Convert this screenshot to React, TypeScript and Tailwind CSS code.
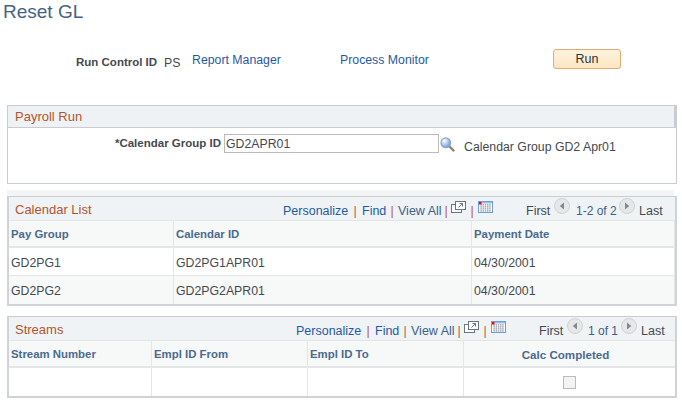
import React from 'react';

const font = { fontFamily: '"Liberation Sans", Arial, sans-serif' };

function LookupIcon() {
  return (
    <svg width="15" height="15" viewBox="0 0 15 15">
      <defs>
        <radialGradient id="lens" cx="35%" cy="30%" r="75%">
          <stop offset="0%" stopColor="#ffffff" />
          <stop offset="100%" stopColor="#5f97dc" />
        </radialGradient>
      </defs>
      <line x1="9.5" y1="9.5" x2="13.5" y2="13.5" stroke="#8d8268" strokeWidth="2.4" strokeLinecap="round" />
      <circle cx="5.8" cy="5.8" r="4.9" fill="url(#lens)" stroke="#8fa3ba" strokeWidth="1.1" />
    </svg>
  );
}

function ZoomIcon() {
  return (
    <svg width="15" height="12" viewBox="0 0 15 12" fill="none">
      <rect x="0.5" y="3.5" width="10" height="8" fill="#fff" stroke="#6a7582" />
      <rect x="4.5" y="0.5" width="10" height="8" fill="#fff" stroke="#6a7582" />
      <path d="M7.5 6.5l4-4M8.5 2.5h3v3" stroke="#6a7582" />
    </svg>
  );
}

function GridIcon() {
  return (
    <svg width="15" height="12" viewBox="0 0 15 12">
      <rect x="0.5" y="0.5" width="14" height="11" fill="#fff" stroke="#6b9ee0" />
      <rect x="1" y="1" width="13" height="1.5" fill="#9cc0ec" />
      {[0, 1, 2, 3].map(r =>
        [0, 1, 2, 3, 4].map(c => (
          <rect key={`${r}-${c}`} x={2.4 + c * 2.2} y={3.2 + r * 2} width="1.5" height="1.4" fill="#9a9fa6" />
        ))
      )}
      <rect x="1" y="1" width="2.5" height="2.5" fill="#e01010" />
    </svg>
  );
}

function NavIcon({ dir }: { dir: 'left' | 'right' }) {
  return (
    <svg width="16" height="16" viewBox="0 0 16 16">
      <circle cx="8" cy="8" r="7.5" fill="#e6e7e8" stroke="#cfd0d2" />
      <path d={dir === 'left' ? 'M10 4.5v7L5.8 8z' : 'M6 4.5v7L10.2 8z'} fill="#85878a" />
    </svg>
  );
}

function Sep({ w }: { w: string }) {
  return <span className={`${w} mt-[5px] text-center text-[#bd5a45]`}>|</span>;
}

function GridToolbar(props: { title: string; range: string; titleW: string; firstMl: string; rangeCls: string }) {
  return (
    <div className="flex h-[24px] items-center border-b border-[#e4e5e6] bg-[#eff3f5] pl-[6px]">
      <span className={`${props.titleW} mt-[3px] shrink-0 text-[13px] text-[#b4552d]`}>{props.title}</span>
      <div className="flex items-center whitespace-nowrap text-[12.5px]">
        <span className="mt-[5px] w-[65px] text-[#1f5aa6]">Personalize</span>
        <Sep w="w-[14px]" />
        <span className="mt-[5px] w-[24px] text-[#1f5aa6]">Find</span>
        <Sep w="w-[12px]" />
        <span className="mt-[5px] w-[43px] text-[#3d5f8a]">View All</span>
        <Sep w="w-[10px]" />
        <span className="mb-[3px]"><ZoomIcon /></span>
        <Sep w="w-[12px]" />
        <span className="mb-[3px]"><GridIcon /></span>
        <span className={`${props.firstMl} mt-[5px] w-[28px] text-[#45494f]`}>First</span>
        <span className="mb-[5px]"><NavIcon dir="left" /></span>
        <span className={`${props.rangeCls} mt-[5px] text-[12px] text-[#3d5f8a]`}>{props.range}</span>
        <span className="mb-[5px]"><NavIcon dir="right" /></span>
        <span className="ml-[4px] mt-[5px] text-[#45494f]">Last</span>
      </div>
    </div>
  );
}

export default function App() {
  return (
    <div className="h-[403px] w-[682px] overflow-hidden bg-white text-[12.3px] text-[#45494f]" style={font}>
      <h1 className="pl-[3px] pt-[1px] text-[19px] leading-[21px] text-[#456285]">Reset GL</h1>

      <div className="mt-[27px] flex h-[20px] items-center whitespace-nowrap pl-[76px]">
        <span className="mt-[8px] w-[88px] text-[11.5px] font-bold">Run Control ID</span>
        <span className="mt-[8px] w-[28px]">PS</span>
        <span className="mt-[2px] w-[148px] text-[#1f5aa6]">Report Manager</span>
        <span className="mt-[2px] w-[213px] text-[#1f5aa6]">Process Monitor</span>
        <button className="h-[20px] w-[68px] rounded-[3px] border border-[#e2ab6f] bg-gradient-to-b from-[#fff3df] to-[#fbe6c3] text-[12.5px] text-[#2c3340]">
          Run
        </button>
      </div>

      <section className="ml-[7px] mt-[36px] h-[79px] w-[670px] border border-[#c9ccd0]">
        <div className="flex h-[22px] items-center border-b border-r-2 border-[#c9ccd0] bg-[#eff2f4] pl-[7px] pt-[1px] text-[13px] text-[#b4552d]">
          Payroll Run
        </div>
        <div className="mt-[6px] flex items-start whitespace-nowrap">
          <span className="mt-[1px] w-[213px] text-right text-[11.5px] font-bold">*Calendar Group ID</span>
          <div className="ml-[3px] flex h-[19px] w-[215px] items-center border border-[#b9bbbe] pl-[1px] pt-[1px]">GD2APR01</div>
          <span className="ml-[1px] mt-[3px] h-[15px]"><LookupIcon /></span>
          <span className="ml-[9px] mt-[4px]">Calendar Group GD2 Apr01</span>
        </div>
      </section>

      <section className="ml-[7px] mt-[6px] w-[670px]">
        <div className="h-[6px] w-[667px] bg-[#f2f4f5]" />
        <div className="border-[2px] border-t border-[#d0d3d6] border-t-[#c9ccd0]">
          <GridToolbar title="Calendar List" range="1-2 of 2" titleW="w-[268px]" firstMl="ml-[33px]" rangeCls="ml-[6px] w-[43px]" />
          <div className="grid grid-cols-[165px_298px_1fr] bg-[#f7f8f8]">
            {['Pay Group', 'Calendar ID', 'Payment Date'].map(h => (
              <div key={h} className="flex h-[27px] items-center border-b-[2px] border-r border-[#e4e5e6] pl-[2px] pt-[2px] text-[11.4px] font-bold text-[#4a6b8f]">
                {h}
              </div>
            ))}
            {['GD2PG1', 'GD2PG1APR01', '04/30/2001'].map(c => (
              <div key={c} className="flex h-[28px] items-center border-b border-r border-[#e4e5e6] bg-white pl-[2px] pt-[3px]">{c}</div>
            ))}
            {['GD2PG2', 'GD2PG2APR01', '04/30/2001'].map(c => (
              <div key={c} className="flex h-[28px] items-center border-r border-[#e4e5e6] pl-[2px] pt-[2px]">{c}</div>
            ))}
          </div>
        </div>
      </section>

      <section className="ml-[7px] mt-[10px] w-[670px] border-[2px] border-t border-[#d0d3d6] border-t-[#c9ccd0]">
        <GridToolbar title="Streams" range="1 of 1" titleW="w-[281px]" firstMl="ml-[33px]" rangeCls="ml-[5px] w-[33px]" />
        <div className="grid grid-cols-[143px_156px_156px_1fr] bg-[#f7f8f8]">
          {['Stream Number', 'Empl ID From', 'Empl ID To'].map(h => (
            <div key={h} className="flex h-[27px] items-center border-b-[2px] border-r border-[#e4e5e6] pl-[2px] pt-[2px] text-[11.4px] font-bold text-[#4a6b8f]">
              {h}
            </div>
          ))}
          <div className="flex h-[27px] items-center justify-center border-b-[2px] border-[#e4e5e6] pr-[8px] pt-[2px] text-[11.6px] font-bold text-[#4a6b8f]">
            Calc Completed
          </div>
          <div className="h-[28px] border-r border-[#e4e5e6] bg-white" />
          <div className="h-[28px] border-r border-[#e4e5e6] bg-white" />
          <div className="h-[28px] border-r border-[#e4e5e6] bg-white" />
          <div className="flex h-[28px] items-center justify-center bg-white">
            <span className="h-[13px] w-[13px] border border-[#b9bbbe] bg-[#f3f3f3]" />
          </div>
        </div>
      </section>
    </div>
  );
}
